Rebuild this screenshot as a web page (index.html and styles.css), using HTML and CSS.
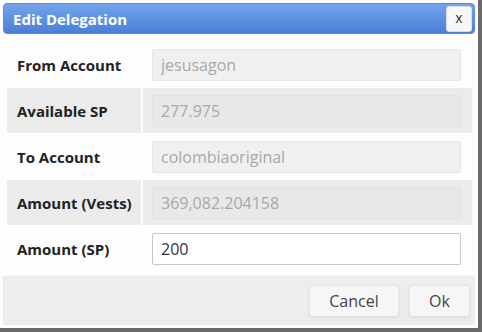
FILE: index.html
```html
<!DOCTYPE html>
<html lang="en">
<head>
  <meta charset="UTF-8" />
  <title>Edit Delegation</title>
  <link rel="stylesheet" href="styles.css">
</head>
<body>
  <div class="dialog">
    <div class="titlebar">
      <span class="title">Edit Delegation</span>
      <button class="close">x</button>
    </div>
    <div class="content">
      <div class="row">
        <div class="label">From Account</div>
        <div class="cell"><input type="text" value="jesusagon" disabled /></div>
      </div>
      <div class="row alt">
        <div class="label">Available SP</div>
        <div class="cell"><input type="text" value="277.975" disabled /></div>
      </div>
      <div class="row">
        <div class="label">To Account</div>
        <div class="cell"><input type="text" value="colombiaoriginal" disabled /></div>
      </div>
      <div class="row alt">
        <div class="label">Amount (Vests)</div>
        <div class="cell"><input type="text" value="369,082.204158" disabled /></div>
      </div>
      <div class="row">
        <div class="label">Amount (SP)</div>
        <div class="cell"><input type="text" value="200" /></div>
      </div>
    </div>
    <div class="buttonpane">
      <button class="btn cancel">Cancel</button>
      <button class="btn ok">Ok</button>
    </div>
  </div>
</body>
</html>
```

FILE: styles.css
```css
body {
  margin: 0;
  background: #6a6a6a;
  font-family: "Open Sans", Arial, sans-serif;
}
.dialog {
  width: 478px;
  height: 328px;
  box-sizing: border-box;
  padding: 3px;
  background: #fdfdfd;
  display: flex;
  flex-direction: column;
}
.titlebar {
  height: 31px;
  flex: none;
  border-radius: 4px;
  background: linear-gradient(#74a4ee, #4a7ed8);
  border: 1px solid #5a8ad8;
  box-sizing: border-box;
  display: flex;
  align-items: center;
  justify-content: space-between;
  padding: 0 2px 0 9px;
}
.title {
  color: #fff;
  font-weight: 700;
  font-size: 15px;
}
.close {
  width: 26px;
  height: 26px;
  border: 1px solid #dcdcdc;
  border-radius: 3px;
  background: #f7f7f7;
  color: #333;
  font-family: "Open Sans", Arial, sans-serif;
  font-size: 14px;
  padding: 0 0 2px;
}
.content {
  padding: 7px 3px 0 4px;
  flex: 1;
}
.row {
  display: grid;
  grid-template-columns: 136px 1fr;
  height: 46px;
  box-sizing: border-box;
  border-top: 1px solid #fdfdfd;
}
.row.alt {
  background: #ebebeb;
}
.label {
  display: flex;
  align-items: center;
  padding-left: 10px;
  font-size: 15px;
  font-weight: 700;
  color: #222;
  border-right: 2px solid #fdfdfd;
}
.cell {
  display: flex;
  align-items: center;
  padding: 0 11px 0 9px;
}
.cell input {
  width: 100%;
  height: 32px;
  box-sizing: border-box;
  border: 1px solid #e6e6e6;
  border-radius: 2px;
  background: #f0f0f0;
  color: #a8a8a8;
  font-family: "Open Sans", Arial, sans-serif;
  font-size: 16px;
  padding: 0 8px;
}
.alt .cell input {
  background: #e8e8e8;
  border-color: #e2e2e2;
}
.cell input:not([disabled]) {
  background: #fff;
  border-color: #c8c8c8;
  color: #333;
}
.buttonpane {
  height: 50px;
  flex: none;
  box-sizing: border-box;
  background: #ededed;
  border-top: 1px solid #f6f6f6;
  display: flex;
  justify-content: flex-end;
  align-items: flex-start;
  gap: 10px;
  padding: 9px 5px 0 0;
}
.btn {
  height: 32px;
  border: 1px solid #e4e4e4;
  border-radius: 3px;
  background: #f6f6f6;
  color: #444;
  font-family: "Open Sans", Arial, sans-serif;
  font-size: 16px;
  box-shadow: 0 1px 2px rgba(0,0,0,0.08);
}
.cancel { width: 90px; }
.ok { width: 61px; }
```
